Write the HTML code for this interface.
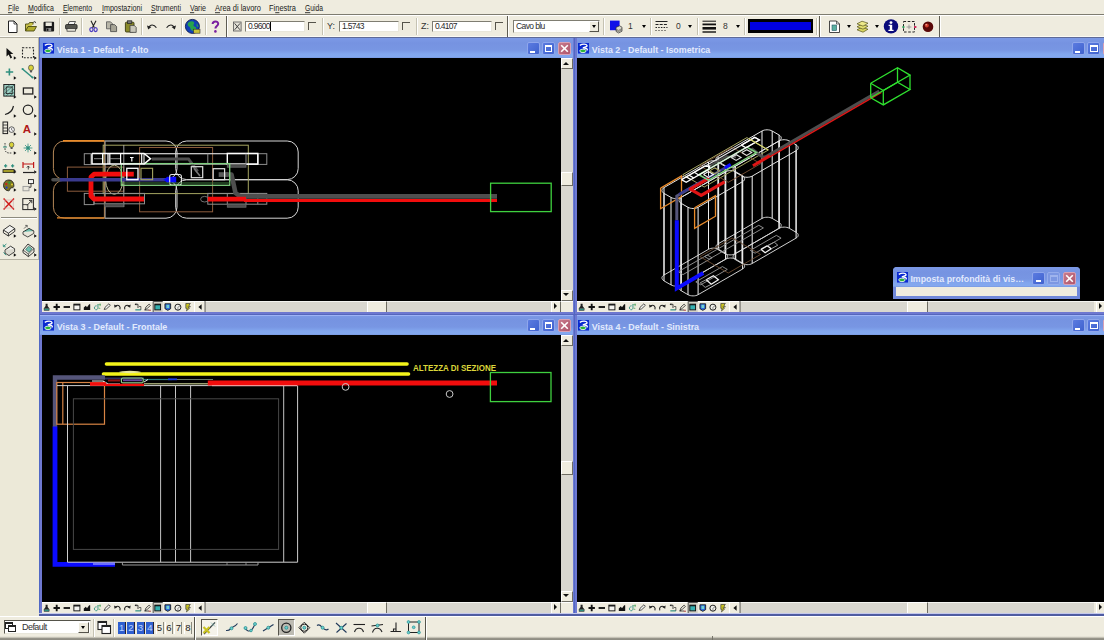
<!DOCTYPE html>
<html lang="it">
<head>
<meta charset="utf-8">
<title>MicroStation</title>
<style>
*{box-sizing:border-box;margin:0;padding:0}
html,body{width:1104px;height:640px;overflow:hidden;background:#ECE9D8}
body{position:relative;font-family:"Liberation Sans",sans-serif;font-size:9px;color:#000}
.a{position:absolute}
#menubar{left:0;top:0;width:1104px;height:15px;background:#EFECDF;border-bottom:1px solid #7E7C70}
#menubar span{position:absolute;top:2px;font-size:9px;line-height:11px;white-space:nowrap;color:#111;letter-spacing:-0.1px}
#menubar u{text-decoration:underline}
#tb{left:0;top:15px;width:1104px;height:23px;background:#EFECDF;border-top:1px solid #fff;border-bottom:1px solid #5E6A98;box-shadow:inset 0 -1px 0 #FBFAF4}
.sep{position:absolute;top:18px;width:2px;height:17px;border-left:1px solid #C5C2B2;border-right:1px solid #fff}
.sep.tall{top:16px;height:21px;border-left-color:#5e5c52}
.inp{position:absolute;top:21px;height:11px;background:#fff;border:1px solid #7F7D72;border-right-color:#E8E6DA;border-bottom-color:#E8E6DA;font-size:8.5px;line-height:9px;padding-left:2px;white-space:nowrap;overflow:hidden;color:#2a2a2a;letter-spacing:-0.7px}
.chk{position:absolute;top:22px;width:8px;height:8px;border-top:1.5px solid #55534a;border-left:1.5px solid #55534a}
.lbl{position:absolute;top:21px;font-size:9px;line-height:11px;color:#333}
.dd{position:absolute;width:0;height:0;border-left:2.5px solid transparent;border-right:2.5px solid transparent;border-top:3px solid #000}
#lt{left:0;top:38px;width:39px;height:222px;background:#EFECDF;border-right:1px solid #B5B2A3;border-bottom:1px solid #B5B2A3}
#leftfill{left:0;top:260px;width:39px;height:356px;background:#ECE9D8}
.win{position:absolute;background:linear-gradient(#6E78D0,#6E78D0);overflow:hidden}
.title{position:absolute;left:0;right:0;top:0;height:20px;background:linear-gradient(#7C99E6 0,#7693E1 5px,#7896E3 12px,#82A6EE 16px,#83A8EF 19px,#7694DC 20px)}
.title b{position:absolute;top:4px;font-size:10px;line-height:12px;font-weight:bold;color:#DDE6FB;white-space:nowrap;letter-spacing:0.15px}
.cv{position:absolute;background:#000;overflow:hidden}
.cv svg{position:absolute;left:0;top:0}
.strip{position:absolute;height:12px;background:#EFECDF;border-top:1px solid #fff}
.track{position:absolute;background:#D9D7CF;border-top:1px solid #f4f4f0}
.thumb{position:absolute;background:#EFECDF;border:1px solid #fff;border-right-color:#6e6c62;border-bottom-color:#6e6c62}
.wb{position:absolute;width:13px;height:13px;border:1px solid #8FA6EC;border-radius:2px;background:linear-gradient(135deg,#5B7BE0,#3F62CF)}
.wb.x{background:linear-gradient(135deg,#C77A8C,#B0566C);border-color:#D8A0B4}
.wb.dis{background:#7C97E2;border-color:#94ABEB}
#status{left:0;top:616px;width:1104px;height:24px;background:#EFECDF;border-top:1px solid #fff}
</style>
</head>
<body>
<div id="menubar" class="a"></div><svg class="a" style="left:0;top:0" width="340" height="15" viewBox="0 0 340 15" font-family="Liberation Sans,sans-serif" font-size="8.600" fill="#1a1a1a"><text id="m0" x="8" y="11.300" textLength="11" lengthAdjust="spacingAndGlyphs"><tspan text-decoration="underline">F</tspan>ile</text><text id="m1" x="28" y="11.300" textLength="26" lengthAdjust="spacingAndGlyphs"><tspan text-decoration="underline">M</tspan>odifica</text><text id="m2" x="63" y="11.300" textLength="29" lengthAdjust="spacingAndGlyphs"><tspan text-decoration="underline">E</tspan>lemento</text><text id="m3" x="102" y="11.300" textLength="40" lengthAdjust="spacingAndGlyphs"><tspan text-decoration="underline">I</tspan>mpostazioni</text><text id="m4" x="151" y="11.300" textLength="30" lengthAdjust="spacingAndGlyphs"><tspan text-decoration="underline">S</tspan>trumenti</text><text id="m5" x="190" y="11.300" textLength="16" lengthAdjust="spacingAndGlyphs"><tspan text-decoration="underline">V</tspan>arie</text><text id="m6" x="215" y="11.300" textLength="46" lengthAdjust="spacingAndGlyphs"><tspan text-decoration="underline">A</tspan>rea di lavoro</text><text id="m7" x="269" y="11.300" textLength="27" lengthAdjust="spacingAndGlyphs">Fi<tspan text-decoration="underline">n</tspan>estra</text><text id="m8" x="305" y="11.300" textLength="18" lengthAdjust="spacingAndGlyphs"><tspan text-decoration="underline">G</tspan>uida</text></svg>
<div id="tb" class="a"></div><div class="a" style="left:0;top:37px;width:39px;height:1px;background:#B0AD9F"></div>
<div class="sep" style="left:59px"></div><div class="sep" style="left:81px"></div><div class="sep" style="left:141px"></div>
<div class="sep" style="left:181px"></div><div class="sep" style="left:205px"></div><div class="sep tall" style="left:226px"></div>
<div class="sep" style="left:322px"></div><div class="sep" style="left:416px"></div><div class="sep tall" style="left:507px"></div>
<div class="sep" style="left:603px"></div><div class="sep" style="left:650px"></div><div class="sep" style="left:697px"></div>
<div class="sep" style="left:744px"></div><div class="sep" style="left:816px"></div><div class="sep tall" style="left:819px"></div><div class="sep tall" style="left:939px"></div>
<div class="inp" style="left:245px;width:60px">0.9600<span style="display:inline-block;width:1px;height:9px;background:#000;vertical-align:top"></span></div><div class="chk" style="left:308px"></div>
<div class="lbl" style="left:327px">Y:</div><div class="inp" style="left:339px;width:60px">1.5743</div><div class="chk" style="left:402px"></div>
<div class="lbl" style="left:421px">Z:</div><div class="inp" style="left:432px;width:60px">0.4107</div><div class="chk" style="left:495px"></div>
<div class="inp" style="left:513px;top:20px;width:87px;height:13px;line-height:11px;letter-spacing:-0.6px">Cavo blu</div>
<div class="a" style="left:589px;top:21px;width:10px;height:11px;background:#EFECDF;border:1px solid #fff;border-right-color:#55534a;border-bottom-color:#55534a"></div>
<div class="dd" style="left:591.5px;top:25px"></div>
<div class="lbl" style="left:628px;font-size:8.5px">1</div><div class="dd" style="left:641.5px;top:25px"></div>
<div class="lbl" style="left:676px;font-size:8.5px">0</div><div class="dd" style="left:688px;top:25px"></div>
<div class="lbl" style="left:723px;font-size:8.5px">8</div><div class="dd" style="left:735.5px;top:25px"></div>
<div class="a" style="left:748px;top:19px;width:65px;height:14px;background:#0000E0;border:3px solid #000;border-left-width:2px;border-right-width:2px"></div>
<div class="dd" style="left:846.5px;top:25px"></div><div class="dd" style="left:874.5px;top:25px"></div>
<svg class="a" style="left:0;top:0" width="1104" height="40" viewBox="0 0 1104 40">
<!-- new -->
<path d="M8.5 21h5.5l3 3v8.5h-8.5z" fill="#fff" stroke="#222" stroke-width="1"/><path d="M14 21v3h3" fill="none" stroke="#222" stroke-width=".8"/>
<!-- open -->
<path d="M25.5 31v-7h3l1-1.5h3.5v2" fill="#c9c24a" stroke="#4a4a12" stroke-width=".9"/><path d="M25.5 31l2.5-4.5h8.5l-2.5 4.5z" fill="#b3ad2e" stroke="#4a4a12" stroke-width=".9"/><path d="M33 22.5l2-1 .8 1.6" fill="none" stroke="#333" stroke-width=".8"/>
<!-- save -->
<rect x="43.5" y="21.8" width="10.6" height="9.8" rx="1" fill="#1a1a1a"/><rect x="45.6" y="22.4" width="6.2" height="3.6" fill="#eceadf"/><rect x="46.4" y="28" width="4.8" height="3.2" fill="#8a8a8a"/><rect x="47" y="28.6" width="1.4" height="2.2" fill="#111"/>
<!-- print -->
<path d="M68 24.5l1.5-3h6l-1.5 3z" fill="#f4f4f4" stroke="#333" stroke-width=".8"/><rect x="65.5" y="24.5" width="11.6" height="4.6" rx="1.2" fill="#55554f" stroke="#222" stroke-width=".8"/><rect x="67" y="28.6" width="8.6" height="2.6" fill="#e4e2d8" stroke="#333" stroke-width=".7"/>
<!-- cut -->
<path d="M91 20.8l3.4 7M96 20.8l-3.6 7" stroke="#222" stroke-width="1.1" fill="none"/><ellipse cx="91.4" cy="29.6" rx="1.6" ry="2" fill="none" stroke="#4a3cc0" stroke-width="1.2"/><ellipse cx="95.6" cy="29.6" rx="1.6" ry="2" fill="none" stroke="#4a3cc0" stroke-width="1.2"/>
<!-- copy -->
<path d="M106.5 21.8h4l2 2v5h-6z" fill="#b8b6a8" stroke="#555" stroke-width=".8"/><path d="M110.6 24.6h4l2 2v5h-6z" fill="#a7a596" stroke="#444" stroke-width=".8"/>
<!-- paste -->
<rect x="125.4" y="22.2" width="8.6" height="9.8" rx="1" fill="#8a8a2a" stroke="#3a3a10" stroke-width=".9"/><rect x="127.6" y="20.8" width="4.2" height="2.6" fill="#777" stroke="#222" stroke-width=".7"/><path d="M130 25.4h4.2l2 2v5h-6.2z" fill="#c9c7ba" stroke="#444" stroke-width=".8"/>
<!-- undo / redo -->
<path d="M149 27.6c1-3.4 5-3.6 7.4.2" fill="none" stroke="#222" stroke-width="1.1"/><path d="M147 25.4l1.2 4 3.2-2.4z" fill="#222"/>
<path d="M174 27.6c-1-3.4-5-3.6-7.4.2" fill="none" stroke="#222" stroke-width="1.1"/><path d="M176 25.4l-1.2 4-3.2-2.4z" fill="#222"/>
<!-- globe -->
<circle cx="192.4" cy="26.4" r="7" fill="#1240b8" stroke="#0a1a50" stroke-width=".9"/><path d="M188.4 22.6c2-1.6 4.6-1.6 5.6-.4s-1.2 2.4-.4 3.6 3 1 2.6 3.2-3.4 2.6-4.8 1.2-.8-2.8-2.4-3.6-1.800-2.600-.6-4z" fill="#27a34c"/><path d="M196.500 23.400c1.400.8 2 2.400 1.800 3.600l-1.600-.8z" fill="#27a34c"/><rect x="193.600" y="29.200" width="6.400" height="4" fill="#c8c23a" stroke="#333" stroke-width=".6"/>
<!-- help -->
<path d="M212.600 24c.2-3.400 5.600-3.400 5.600-.2 0 2.200-2.800 2.400-2.800 4.800" fill="none" stroke="#7a1fa0" stroke-width="2"/><circle cx="215.400" cy="31.400" r="1.300" fill="#7a1fa0"/>
<!-- X lock -->
<rect x="233.500" y="22" width="7.600" height="9" fill="#e4e2d8" stroke="#555" stroke-width=".8"/><path d="M234.600 23.400l5.400 6.400M240 23.400l-5.400 6.400" stroke="#333" stroke-width=".9"/>
<!-- level icon -->
<rect x="610" y="20.600" width="9.600" height="9.600" fill="#1010e8"/><path d="M616 27.400l3.600-1.600 2.400 1.400v4l-3.400 1.800-2.600-1.600z" fill="#d8d6ca" stroke="#333" stroke-width=".7"/><path d="M616 29l2.600 1.400 3.400-1.800M616 30.200l2.600 1.400 3.400-1.800" fill="none" stroke="#333" stroke-width=".5"/>
<!-- line style -->
<path d="M655.500 21.500h12" stroke="#222" stroke-width="1"/><path d="M655.500 24.500h12" stroke="#222" stroke-width="1" stroke-dasharray="3 1.200"/><path d="M655.500 27.500h12" stroke="#222" stroke-width="1" stroke-dasharray="1.500 1.200"/><path d="M655.500 30.500h12" stroke="#222" stroke-width="1" stroke-dasharray="1 2"/>
<!-- weight -->
<path d="M702.500 21.200h13.500" stroke="#111" stroke-width="1"/><path d="M702.500 24.400h13.500" stroke="#111" stroke-width="1.800"/><path d="M702.500 28.300h13.500" stroke="#111" stroke-width="2.600"/><path d="M702.500 32h13.500" stroke="#111" stroke-width="1.400"/>
<!-- doc icon -->
<path d="M829.500 21h7l3 3v8.500h-10z" fill="#fff" stroke="#333" stroke-width=".9"/><path d="M836.500 21v3h3" fill="none" stroke="#333" stroke-width=".7"/><rect x="832" y="25" width="4.600" height="5.600" fill="#5ab0a0" stroke="#2a5a6a" stroke-width=".6"/>
<!-- layers -->
<path d="M857 29.800l5-2.600 6 2-5 3z" fill="#d9d560" stroke="#55531a" stroke-width=".7"/><path d="M857 26.800l5-2.600 6 2-5 3z" fill="#e3df70" stroke="#55531a" stroke-width=".7"/><path d="M857 23.800l5-2.600 6 2-5 3z" fill="#ece88a" stroke="#55531a" stroke-width=".7"/>
<!-- info -->
<circle cx="891" cy="26.400" r="7.200" fill="#0a0a7a"/><rect x="889.800" y="24.800" width="2.400" height="5.800" fill="#fff"/><circle cx="891" cy="22.600" r="1.400" fill="#fff"/><rect x="888.600" y="24.800" width="2" height="1.200" fill="#fff"/><rect x="888.400" y="29.800" width="5.200" height="1.200" fill="#fff"/>
<!-- sel -->
<rect x="903.500" y="21.500" width="11" height="10.500" fill="none" stroke="#222" stroke-width="1" stroke-dasharray="2.600 1.600"/><path d="M909 24.600v4.600M906.600 27h4.800" stroke="#888" stroke-width=".8"/><rect x="914" y="26" width="2.400" height="2" fill="#d03060"/><rect x="902.400" y="26" width="2" height="2" fill="#30a060"/>
<!-- ball -->
<circle cx="928" cy="26.800" r="5.300" fill="#5a0808"/><circle cx="926.800" cy="25.400" r="2" fill="#d03a2a"/><circle cx="926.200" cy="24.800" r=".8" fill="#f8b0a0"/>
</svg>
<div id="lt" class="a"></div><div id="leftfill" class="a"></div>
<div class="a" style="left:1px;top:217px;width:36px;height:2px;border-top:1px solid #8c8a7e;border-bottom:1px solid #fff"></div>
<svg class="a" style="left:0;top:38px" width="40" height="224" viewBox="0 38 40 224">
<g id="tri" fill="#111"><path d="M13.8 56.3l2.600 1.700-2.600 1.700z M34.2 56.3l2.600 1.700-2.600 1.700z M13.8 76.3l2.600 1.700-2.600 1.700z M34.2 76.3l2.600 1.700-2.600 1.700z M13.8 95.3l2.600 1.700-2.600 1.700z M34.2 95.3l2.600 1.700-2.600 1.700z M13.8 114.3l2.600 1.700-2.600 1.700z M34.2 114.3l2.600 1.700-2.600 1.700z M13.8 132.3l2.600 1.700-2.600 1.700z M34.2 132.3l2.600 1.700-2.600 1.700z M13.8 151.3l2.600 1.700-2.600 1.700z M34.2 151.3l2.600 1.700-2.600 1.700z M13.8 170.3l2.600 1.700-2.600 1.700z M34.2 170.3l2.600 1.700-2.600 1.700z M13.8 188.3l2.600 1.700-2.600 1.700z M34.2 188.3l2.600 1.700-2.600 1.700z M34.2 207.3l2.600 1.700-2.600 1.700z M13.8 234.3l2.600 1.700-2.600 1.700z M34.2 234.3l2.600 1.700-2.600 1.700z M13.8 253.3l2.600 1.700-2.600 1.700z M34.2 253.3l2.600 1.700-2.600 1.700z"/></g>
<!-- r1 arrow, fence -->
<path d="M6.500 48v8.600l2.200-2 1.800 3.800 1.600-.8-1.800-3.600h3z" fill="#111"/>
<rect x="22.500" y="47.800" width="11" height="10" fill="none" stroke="#222" stroke-width="1.100" stroke-dasharray="1.800 1.400"/>
<!-- r2 plus, line+bulb -->
<path d="M9.400 68.500v7M5.800 72h7.400" stroke="#2f8f7f" stroke-width="1.600"/>
<path d="M22.500 69l10 8.500" stroke="#2f8f7f" stroke-width="1.500"/><circle cx="22.600" cy="69" r="1.100" fill="#2f8f7f"/><circle cx="32.600" cy="77.500" r="1.100" fill="#2f8f7f"/>
<ellipse cx="31" cy="67.800" rx="2.500" ry="2.800" fill="#d8d23a" stroke="#444" stroke-width=".7"/><rect x="29.900" y="70.400" width="2.200" height="2" fill="#555"/>
<!-- r3 hatch, rect -->
<rect x="3.800" y="84.500" width="10.800" height="11.600" fill="#9fd0c4" stroke="#222" stroke-width="1"/><path d="M4 90l6-5.500M4 94l10-9M6 96l8.500-7.500M10 96l4.500-4" stroke="#2a5a52" stroke-width=".7"/><rect x="6.200" y="87" width="6" height="6.600" fill="none" stroke="#222" stroke-width=".8"/>
<rect x="23.400" y="88" width="9.400" height="6" fill="none" stroke="#222" stroke-width="1.300"/>
<!-- r4 arc, circle -->
<path d="M5 114.500c4.500-1 7.500-4 8.500-8.500" fill="none" stroke="#222" stroke-width="1.200"/>
<circle cx="28" cy="109.800" r="4.700" fill="none" stroke="#222" stroke-width="1.200"/>
<!-- r5 tags, A -->
<rect x="3" y="122" width="4.600" height="11.600" fill="none" stroke="#222" stroke-width="1"/><path d="M3 125h4.600M3 128h4.600M3 131h4.600" stroke="#222" stroke-width=".8"/><circle cx="11.600" cy="129.600" r="2.800" fill="#f4f4f4" stroke="#333" stroke-width=".8"/><path d="M11.600 128v1.800l1.200.8" stroke="#333" stroke-width=".6" fill="none"/>
<text x="22.800" y="132.600" font-family="Liberation Sans,sans-serif" font-weight="bold" font-size="11.500" fill="#b01818">A</text>
<!-- r6 -->
<path d="M5 143v6c0 3 2 4 4 4h3" fill="none" stroke="#333" stroke-width=".9" stroke-dasharray="1.600 1"/><ellipse cx="11.600" cy="144.800" rx="2.300" ry="2.600" fill="#d8d23a" stroke="#444" stroke-width=".7"/><rect x="10.600" y="147.200" width="2" height="1.800" fill="#555"/><path d="M3 147h4" stroke="#2f8f7f" stroke-width="1"/>
<circle cx="28" cy="148" r="1.800" fill="#2f8f7f"/><path d="M28 143.600v8.800M23.600 148h8.800M25 145l6 6M31 145l-6 6" stroke="#2f8f7f" stroke-width=".8"/>
<!-- r7 -->
<path d="M5.600 164.200v3.200M4 165.800h3.200M12.600 164.200v3.200M11 165.800h3.200" stroke="#2f8f7f" stroke-width="1.200"/><rect x="3" y="169.600" width="11" height="3" fill="#a39c2a" stroke="#222" stroke-width=".8"/><path d="M14 169.600l2 1.500-2 1.500z" fill="#222"/>
<path d="M23 162v6M33.600 162v6M23 164h10.600" stroke="#c01818" stroke-width="1.200"/><path d="M23 172.500h11" stroke="#222" stroke-width="1.200"/><path d="M28.300 166v3.500M26.800 167.600l1.500-1.600 1.500 1.600" stroke="#222" stroke-width=".8" fill="none"/>
<!-- r8 palette, boxes -->
<path d="M9 180c-4 0-5.500 3-5.500 5.400 0 3.600 3 5.400 5 5.400 1.600 0 1-1.800 2-2.600 1.200-.9 3.400.4 3.400-2.800 0-3-2-5.400-4.900-5.400z" fill="#7a7424" stroke="#222" stroke-width=".9"/><circle cx="6.200" cy="184" r="1.100" fill="#d02020"/><circle cx="9.400" cy="182.600" r="1.100" fill="#20a040"/><circle cx="6.600" cy="187.600" r="1.100" fill="#2040d0"/><circle cx="12" cy="184.600" r="1" fill="#e0d030"/>
<rect x="28.500" y="179.600" width="5" height="4" fill="#f4f4f4" stroke="#222" stroke-width=".9"/><rect x="23" y="186.400" width="6" height="4.400" fill="#e8e6da" stroke="#999" stroke-width=".9"/><path d="M31 183.600v3.600h-2" fill="none" stroke="#222" stroke-width=".8"/>
<!-- r9 delete, scale -->
<path d="M3.600 198.600l10.400 11M14 198.600l-10.400 11" stroke="#d01818" stroke-width="1.400"/><rect x="4.400" y="200" width="8.800" height="8" fill="none" stroke="#caa" stroke-width=".6"/>
<rect x="22.800" y="198.600" width="10.600" height="11" fill="none" stroke="#222" stroke-width="1"/><path d="M22.800 204.600h5v5" fill="none" stroke="#222" stroke-width=".8"/><path d="M27 205.400l4.600-4.800M29 200.400h2.800v2.800" fill="none" stroke="#222" stroke-width=".9"/>
<!-- r10 3d -->
<path d="M3.400 230l6.400-4.600 5 3.200-6.400 4.600z" fill="#f2f2ee" stroke="#222" stroke-width=".9"/><path d="M3.400 230v2.800l5 3.200 6.400-4.600v-2.800M8.400 233.200v2.800" fill="none" stroke="#222" stroke-width=".9"/>
<path d="M23 232l6-3.600 4.800 2.600-6 3.600z" fill="#6fc0b0" stroke="#222" stroke-width=".9"/><path d="M23 232v2.400l4.800 2.600 6-3.600V231" fill="#e8e6da" stroke="#222" stroke-width=".8"/><path d="M24 228.600l3-3M25.200 225.400h2v2" stroke="#333" stroke-width=".7" fill="none"/>
<!-- r11 -->
<path d="M5 250l5.600-3.800 4 2.600-5.600 3.800z" fill="#f2f2ee" stroke="#222" stroke-width=".9"/><path d="M5 250v3l4 2.600 5.600-3.800v-3" fill="#dcdad0" stroke="#222" stroke-width=".8"/><path d="M3.400 246.400l3-2.400M3.200 244.400l.2 2.200 2.200.2" stroke="#2f8f7f" stroke-width=".9" fill="none"/><path d="M3.600 252.400l2.400 2.800" stroke="#2f8f7f" stroke-width="1"/>
<path d="M23 250l5-6 6 4.400v3.600l-5.600 4.600-5.400-4z" fill="#eceae0" stroke="#222" stroke-width=".9"/><path d="M25.600 249.600l3-3.400 3.400 2.600-3 3.400z" fill="#6fc0b0" stroke="#2a5a52" stroke-width=".6"/><path d="M23 250l5.400 4 5.600-5.600M28.400 254v2.600" fill="none" stroke="#222" stroke-width=".7"/>
</svg>
<div class="win" id="w1" style="left:39px;top:38px;width:536px;height:277px"><div class="a" style="left:0;top:0;width:1px;height:277px;background:#5068C4"></div><div class="title" style="top:0px;left:1px;right:2.5px"></div><svg class="a" style="left:0;top:0" width="113.39999999999999" height="20.6" viewBox="0 0 113.39999999999999 20.6"><text x="17.8" y="14.6" font-family="Liberation Sans,sans-serif" font-weight="bold" font-size="9.700" fill="#E2EAFD" textLength="91.6" lengthAdjust="spacingAndGlyphs">Vista 1 - Default - Alto</text></svg><svg class="a" style="left:3.5px;top:4.5px" width="11.500" height="11" viewBox="0 0 13 12" preserveAspectRatio="none"><rect x="0" y="0" width="12.500" height="11.500" fill="#0a2ad0"/><path d="M2 2.600c3-2 7.500-1.800 8.200 0 .6 1.600-3 2-4.600 2.600 2.400.2 5.400.8 5 2.800" fill="none" stroke="#fff" stroke-width="1.500"/><ellipse cx="5.600" cy="8.600" rx="3.600" ry="1.900" fill="#2bb53a" stroke="#fff" stroke-width=".9"/></svg><div class="cv" style="left:3px;top:20px;width:519px;height:243px"><svg width="519" height="243" viewBox="42 58 519 243"><defs><clipPath id="cR1"><rect x="104.5" y="130" width="300" height="100"/></clipPath><clipPath id="cL1"><rect x="40" y="130" width="64.5" height="100"/></clipPath></defs><rect x="53.4" y="141.0" width="123.6" height="38.6" rx="11" fill="none" stroke="#d6d6d6" stroke-width="1" clip-path="url(#cR1)"/><rect x="53.4" y="179.8" width="123.6" height="38.4" rx="11" fill="none" stroke="#d6d6d6" stroke-width="1" clip-path="url(#cR1)"/><rect x="53.4" y="141.0" width="123.6" height="38.6" rx="11" fill="none" stroke="#b48858" stroke-width="1" clip-path="url(#cL1)"/><rect x="53.4" y="179.8" width="123.6" height="38.4" rx="11" fill="none" stroke="#b48858" stroke-width="1" clip-path="url(#cL1)"/><rect x="175.7" y="141.0" width="122.5" height="38.6" rx="11" fill="none" stroke="#d6d6d6" stroke-width="1"/><rect x="175.7" y="179.8" width="122.5" height="38.4" rx="11" fill="none" stroke="#d6d6d6" stroke-width="1"/><path d="M63.0 140.9 L104.4 140.9" fill="none" stroke="#e88a2a" stroke-width="1.6" /><path d="M57.0 217.9 L104.4 217.9" fill="none" stroke="#e88a2a" stroke-width="1.4" /><path d="M104.4 141.0 L104.4 218.0" fill="none" stroke="#b48858" stroke-width="1" /><rect x="103.2" y="145.2" width="145.1" height="48.4" rx="0" fill="none" stroke="#a6a662" stroke-width="1"/><rect x="139.6" y="147.5" width="73.0" height="64.3" rx="0" fill="none" stroke="#8c5c3c" stroke-width="1"/><rect x="67.4" y="167.1" width="56.4" height="24.1" rx="0" fill="none" stroke="#8c5c3c" stroke-width="1"/><path d="M105.3 141.0 L105.3 218.0" fill="none" stroke="#9a9a9a" stroke-width="0.8" /><path d="M123.8 145.0 L123.8 207.0" fill="none" stroke="#b0b0b0" stroke-width="0.9" /><ellipse cx="114.3" cy="179.7" rx="8.700" ry="14.600" fill="none" stroke="#b4b48a" stroke-width="1"/><rect x="84.3" y="153.7" width="6.7" height="10.9" rx="0" fill="none" stroke="#8e8e8e" stroke-width="1"/><rect x="144.0" y="153.7" width="113.8" height="10.3" rx="0" fill="none" stroke="#d6d6d6" stroke-width="1.2"/><rect x="257.8" y="153.7" width="9.0" height="10.7" rx="0" fill="none" stroke="#8e8e8e" stroke-width="1"/><path d="M207.8 153.7 L207.8 164.0" fill="none" stroke="#8e8e8e" stroke-width="1" /><rect x="227.3" y="153.4" width="30.5" height="10.8" rx="0" fill="none" stroke="#fff" stroke-width="1.4"/><path d="M246.0 153.7 L246.0 164.0" fill="none" stroke="#8e8e8e" stroke-width="1" /><rect x="227.3" y="164.2" width="18.7" height="3.0" rx="0" fill="#4a4a4a" stroke="#6a6a6a" stroke-width="0.8"/><rect x="84.3" y="193.4" width="9.7" height="11.2" rx="0" fill="none" stroke="#8e8e8e" stroke-width="1"/><rect x="94.0" y="193.4" width="50.5" height="10.4" rx="0" fill="none" stroke="#8e8e8e" stroke-width="1"/><rect x="104.7" y="203.8" width="19.0" height="3.0" rx="0" fill="#4a4a4a" stroke="#6a6a6a" stroke-width="0.8"/><rect x="207.8" y="193.4" width="59.0" height="10.8" rx="0" fill="none" stroke="#8e8e8e" stroke-width="1"/><path d="M227.3 193.4 L227.3 204.2" fill="none" stroke="#8e8e8e" stroke-width="1" /><path d="M246.0 193.4 L246.0 204.2" fill="none" stroke="#8e8e8e" stroke-width="1" /><path d="M257.8 193.4 L257.8 204.2" fill="none" stroke="#8e8e8e" stroke-width="1" /><rect x="227.3" y="204.2" width="18.7" height="3.0" rx="0" fill="#4a4a4a" stroke="#6a6a6a" stroke-width="0.8"/><ellipse cx="204.600" cy="199.200" rx="4" ry="2.800" fill="none" stroke="#7a7a7a" stroke-width=".9"/><path d="M151.8 158.9 L188.5 158.9 L197.6 171.5" fill="none" stroke="#4e4e4e" stroke-width="3" /><rect x="218.7" y="172.2" width="9.3" height="4.7" rx="0" fill="#5a5a5a" stroke="none" stroke-width="0"/><path d="M226.0 174.5 L231.5 174.5 L235.5 193.0 L240.0 196.4 L497.0 196.4" fill="none" stroke="#4e4e4e" stroke-width="4.6" stroke-linejoin="round"/><path d="M133.8 174.2 L94.0 174.2 L91.0 177.0 L91.0 196.0 L94.0 199.0 L144.0 199.0" fill="none" stroke="#f20d0d" stroke-width="4.8" stroke-linejoin="round"/><path d="M207.8 199.2 L246.0 199.2" fill="none" stroke="#f20d0d" stroke-width="4.8" /><path d="M244.0 200.5 L497.0 200.5" fill="none" stroke="#f20d0d" stroke-width="3.2" /><path d="M53.0 179.7 L61.0 179.7" fill="none" stroke="#4e4e4e" stroke-width="3.6" stroke-linecap="round"/><path d="M60.0 179.7 L168.0 179.7" fill="none" stroke="#3a3a8e" stroke-width="3.6" /><rect x="166.7" y="176.8" width="9.5" height="5.8" rx="0" fill="#0b0bff" stroke="none" stroke-width="0"/><path d="M163.500 179.700l4-3v6z" fill="#0b0bff"/><rect x="169.7" y="174.5" width="11.7" height="10.5" rx="2" fill="none" stroke="#e8e8e8" stroke-width="1.1"/><rect x="121.3" y="163.6" width="108.4" height="21.7" rx="0" fill="none" stroke="#7fd07f" stroke-width="1.3"/><path d="M121.3 183.0 L229.7 183.0" fill="none" stroke="#3f7a3f" stroke-width="1" /><path d="M92.0 153.5 L144.0 153.5 L150.5 158.7 L144.0 164.0 L92.0 164.0 L92.0 153.5" fill="none" stroke="#fff" stroke-width="1.5" /><path d="M102.6 153.5 L102.6 164.0" fill="none" stroke="#fff" stroke-width="1.2" /><path d="M108.0 153.5 L108.0 164.0" fill="none" stroke="#fff" stroke-width="1.2" /><path d="M109.8 153.5 L109.8 164.0" fill="none" stroke="#fff" stroke-width="1.2" /><path d="M120.6 153.5 L120.6 164.0" fill="none" stroke="#fff" stroke-width="1.2" /><path d="M141.7 153.5 L141.7 164.0" fill="none" stroke="#fff" stroke-width="1.2" /><path d="M94.0 158.7 L102.0 158.7" fill="none" stroke="#aaa" stroke-width="0.8" /><path d="M110.0 158.7 L120.0 158.7" fill="none" stroke="#aaa" stroke-width="0.8" /><path d="M130.0 157.5 L133.6 157.5" fill="none" stroke="#fff" stroke-width="1" /><path d="M131.8 157.5 L131.8 161.5" fill="none" stroke="#fff" stroke-width="1.2" /><rect x="126.8" y="168.3" width="11.2" height="11.4" rx="0" fill="none" stroke="#fff" stroke-width="1.3"/><rect x="141.0" y="168.3" width="11.6" height="11.4" rx="0" fill="none" stroke="#a6a662" stroke-width="1.1"/><rect x="191.3" y="166.7" width="11.4" height="11.0" rx="0" fill="none" stroke="#e0e0e0" stroke-width="1.2"/><path d="M194.0 168.5 L200.0 176.0" fill="none" stroke="#777" stroke-width="1.6" /><rect x="213.2" y="168.7" width="11.4" height="11.0" rx="0" fill="none" stroke="#e0e0e0" stroke-width="1.2"/><rect x="490.6" y="183.2" width="60.6" height="28.4" rx="0" fill="none" stroke="#3fd03f" stroke-width="1.3"/></svg></div><div class="strip" style="left:3px;top:263px;width:530.5px"></div><div class="track" style="left:165.5px;top:263px;width:346.0px;height:11.500px"></div><svg class="a" style="left:3px;top:263px" width="166" height="12" viewBox="0 0 166 12"><g transform="translate(4.60 6) scale(.84) translate(-4.60 -6)"><path d="M3.3999999999999995 2.200h2.400v2.600l1.800 2.400h-6l1.800-2.400z" fill="#222"/><rect x="1.5999999999999996" y="7.600" width="6" height="2.400" fill="#2f8f7f" stroke="#222" stroke-width=".6"/></g><g transform="translate(14.70 6) scale(.84) translate(-14.70 -6)"><path d="M14.7 2.200v7.600M10.899999999999999 6h7.600" stroke="#111" stroke-width="2.200"/></g><g transform="translate(24.80 6) scale(.84) translate(-24.80 -6)"><path d="M20.999999999999996 6h7.600" stroke="#111" stroke-width="2.200"/></g><g transform="translate(34.90 6) scale(.84) translate(-34.90 -6)"><rect x="31.299999999999997" y="2.600" width="7.200" height="6.800" fill="#f4f4f0" stroke="#111" stroke-width="1.100"/><path d="M31.299999999999997 3.400h7.200" stroke="#111" stroke-width="1.600"/></g><g transform="translate(45.00 6) scale(.84) translate(-45.00 -6)"><path d="M41.2 9.600v-3l2.400-2 1.400 1.600 2.600-3.600 1.200 0v7z" fill="#111"/></g><g transform="translate(55.10 6) scale(.84) translate(-55.10 -6)"><path d="M52.5 8.600c-1.600-2 0-4 2-4M56.1 2.400v4.400c0 2-1.600 2.800-3 2.400" fill="none" stroke="#2f8f7f" stroke-width="1.100"/><path d="M56.7 3.200l2.400-.8-.6 2.600M56.9 7.400l2 .2" stroke="#3a9a4a" stroke-width=".9" fill="none"/></g><g transform="translate(65.20 6) scale(.84) translate(-65.20 -6)"><path d="M61.59999999999999 9l1-2.600 4.600-4.200 1.800 1.800-4.600 4.200z" fill="#f4f4f0" stroke="#222" stroke-width=".9"/></g><path d="M77.89999999999999 8.400c1-3.200-1.400-5.200-4.400-3.600" fill="none" stroke="#222" stroke-width="1.100"/><path d="M72.1 3.400l.4 3.400 2.800-1.600z" fill="#222"/><path d="M82.8 8.400c-1-3.200 1.400-5.200 4.400-3.600" fill="none" stroke="#222" stroke-width="1.100"/><path d="M88.6 3.400l-.4 3.400-2.800-1.600z" fill="#222"/><g transform="translate(95.50 6) scale(.84) translate(-95.50 -6)"><path d="M92.49999999999999 2.800h3.600v4.400" fill="none" stroke="#222" stroke-width="1"/><path d="M92.09999999999998 2.800l2-1.400v2.800z" fill="#222"/><path d="M92.89999999999999 9.400h6.600" stroke="#2f8f7f" stroke-width="1.400"/><path d="M97.29999999999998 5.400h2.200v4" stroke="#222" stroke-width=".8" fill="none"/></g><g transform="translate(105.60 6) scale(.84) translate(-105.60 -6)"><path d="M102.0 9.600h5.400M102.39999999999999 9.600l1.200-3.600 3.800-3.400 1.600 1.600-3.800 3.400z" fill="none" stroke="#222" stroke-width=".9"/><path d="M107.0 9.800h2.600" stroke="#a02020" stroke-width="1"/></g><rect x="110.69999999999999" y="0" width="10" height="11.500" fill="#d4d1c6"/><path d="M111.19999999999999 11.500v-11h9.500" fill="none" stroke="#555" stroke-width="1"/><g transform="translate(115.70 6) scale(.84) translate(-115.70 -6)"><rect x="112.29999999999998" y="2.600" width="6.800" height="6.800" fill="#35b0b0" stroke="#111" stroke-width="1.100"/><path d="M112.29999999999998 3.300h6.800" stroke="#111" stroke-width="1.300"/></g><g transform="translate(125.80 6) scale(.84) translate(-125.80 -6)"><path d="M122.39999999999998 2.200h6.800v5.800l-3.400 2-3.400-2z" fill="#2e6ad8" stroke="#111" stroke-width="1"/><rect x="124.19999999999999" y="3.400" width="3.200" height="3.800" fill="#6fd0d0"/></g><g transform="translate(135.90 6) scale(.84) translate(-135.90 -6)"><circle cx="135.89999999999998" cy="6.200" r="3.600" fill="#f0f0ea" stroke="#111" stroke-width="1.100"/><path d="M135.89999999999998 6.200v3.600M135.89999999999998 6.200l3-1.800" stroke="#555" stroke-width=".7"/></g><g transform="translate(146.00 6) scale(.84) translate(-146.00 -6)"><path d="M143.4 1.800h5.400l-1.600 2 1.600 2h-3l2 1.600-3.600 3.200.8-3h-1.600z" fill="#c9c320" stroke="#333" stroke-width=".8"/></g><rect x="152.500" y="0.500" width="10" height="11" fill="#EFECDF" stroke="#fff" stroke-width="1"/><path d="M152 11.500h11v-11.500" fill="none" stroke="#55534a" stroke-width="1"/><path d="M159.600 3.200v5.600l-3.200-2.800z" fill="#111"/></svg><div class="thumb" style="left:328px;top:263px;width:19.5px;height:11.5px"></div><div class="thumb" style="left:511.5px;top:263px;width:10.5px;height:11.5px"></div><div class="a" style="left:514.75px;top:265.25px;width:0;height:0;border-top:3px solid transparent;border-bottom:3px solid transparent;border-left:3.500px solid #111"></div><div class="track" style="left:522px;top:20px;width:11.500px;height:243px"></div><div class="thumb" style="left:522px;top:20px;width:11.5px;height:11px"></div><div class="a" style="left:524.25px;top:23.5px;width:0;height:0;border-left:3px solid transparent;border-right:3px solid transparent;border-bottom:3.500px solid #111"></div><div class="thumb" style="left:522px;top:251.5px;width:11.5px;height:11.5px"></div><div class="a" style="left:524.25px;top:255.25px;width:0;height:0;border-left:3px solid transparent;border-right:3px solid transparent;border-top:3.500px solid #111"></div><div class="thumb" style="left:522px;top:134px;width:11.5px;height:13.5px"></div><div class="wb" style="left:487.5px;top:4px"><div class="a" style="left:2.500px;top:7.500px;width:5px;height:2px;background:#fff"></div></div><div class="wb" style="left:502.9px;top:4px"><div class="a" style="left:2px;top:2px;width:7.500px;height:7px;border:1px solid #fff;border-top-width:2px"></div></div><div class="wb x" style="left:518.5px;top:4px"><svg class="a" style="left:0;top:0" width="11" height="11" viewBox="0 0 11 11"><path d="M2.200 2.200l6.600 6.600M8.800 2.200l-6.600 6.600" stroke="#fff" stroke-width="1.600"/></svg></div></div>
<div class="win" id="w2" style="left:574px;top:38px;width:540px;height:277px"><div class="a" style="left:0;top:0;width:1px;height:277px;background:#5068C4"></div><div class="title" style="top:0px;left:2.5px;right:0px"></div><svg class="a" style="left:0;top:0" width="140.3" height="20.6" viewBox="0 0 140.3 20.6"><text x="17.8" y="14.6" font-family="Liberation Sans,sans-serif" font-weight="bold" font-size="9.700" fill="#E2EAFD" textLength="118.5" lengthAdjust="spacingAndGlyphs">Vista 2 - Default - Isometrica</text></svg><svg class="a" style="left:3.5px;top:4.5px" width="11.500" height="11" viewBox="0 0 13 12" preserveAspectRatio="none"><rect x="0" y="0" width="12.500" height="11.500" fill="#0a2ad0"/><path d="M2 2.600c3-2 7.500-1.800 8.200 0 .6 1.600-3 2-4.600 2.600 2.400.2 5.400.8 5 2.800" fill="none" stroke="#fff" stroke-width="1.500"/><ellipse cx="5.600" cy="8.600" rx="3.600" ry="1.900" fill="#2bb53a" stroke="#fff" stroke-width=".9"/></svg><div class="cv" style="left:3px;top:20px;width:527px;height:243px"><svg width="527" height="243" viewBox="577 58 527 243"><path d="M708.5 161.9 L709.6 161.4 L710.8 161.0 L712.2 160.8 L713.6 160.7 L715.0 160.8 L716.3 161.0 L717.6 161.4 L718.6 161.9 L725.6 165.9 L726.5 166.6 L727.1 167.3 L727.5 168.1 L727.7 168.9 L727.5 169.7 L727.1 170.4 L726.5 171.2 L725.6 171.8 L681.1 197.4 L680.1 198.0 L678.8 198.3 L677.5 198.6 L676.1 198.7 L674.7 198.6 L673.3 198.3 L672.1 198.0 L671.0 197.4 L664.0 193.4 L663.2 192.8 L662.5 192.1 L662.1 191.3 L661.9 190.5 L662.1 189.7 L662.5 188.9 L663.2 188.2 L664.0 187.6 L708.5 161.9" fill="none" stroke="#e4e4e4" stroke-width="1" /><path d="M708.5 249.3 L709.6 248.8 L710.8 248.4 L712.2 248.2 L713.6 248.1 L715.0 248.2 L716.3 248.4 L717.6 248.8 L718.6 249.3 L725.6 253.3 L726.5 254.0 L727.1 254.7 L727.5 255.5 L727.7 256.3 L727.5 257.1 L727.1 257.9 L726.5 258.6 L725.6 259.2 L681.1 284.9 L680.1 285.4 L678.8 285.8 L677.5 286.0 L676.1 286.1 L674.7 286.0 L673.3 285.8 L672.1 285.4 L671.0 284.9 L664.0 280.9 L663.2 280.2 L662.5 279.5 L662.1 278.7 L661.9 277.9 L662.1 277.1 L662.5 276.3 L663.2 275.6 L664.0 275.0 L708.5 249.3" fill="none" stroke="#cfcfcf" stroke-width="1" /><path d="M708.5 161.9 L708.5 249.3" fill="none" stroke="#ececec" stroke-width="1.05" /><path d="M718.6 161.9 L718.6 249.3" fill="none" stroke="#ececec" stroke-width="1.05" /><path d="M725.6 165.9 L725.6 253.3" fill="none" stroke="#ececec" stroke-width="1.05" /><path d="M725.6 171.8 L725.6 259.2" fill="none" stroke="#ececec" stroke-width="1.05" /><path d="M681.1 197.4 L681.1 284.9" fill="none" stroke="#ececec" stroke-width="1.05" /><path d="M671.0 197.4 L671.0 284.9" fill="none" stroke="#ececec" stroke-width="1.05" /><path d="M664.0 193.4 L664.0 280.9" fill="none" stroke="#ececec" stroke-width="1.05" /><path d="M664.0 187.6 L664.0 275.0" fill="none" stroke="#ececec" stroke-width="1.05" /><path d="M725.6 171.8 L726.7 171.3 L727.9 170.9 L729.3 170.7 L730.7 170.6 L732.1 170.7 L733.4 170.9 L734.6 171.3 L735.7 171.8 L742.6 175.7 L743.5 176.4 L744.1 177.1 L744.5 177.9 L744.7 178.7 L744.5 179.5 L744.1 180.3 L743.5 181.0 L742.6 181.6 L698.1 207.3 L697.1 207.8 L695.8 208.2 L694.5 208.4 L693.1 208.5 L691.7 208.4 L690.3 208.2 L689.1 207.8 L688.0 207.3 L681.1 203.3 L680.2 202.7 L679.6 202.0 L679.2 201.2 L679.0 200.4 L679.2 199.6 L679.6 198.8 L680.2 198.1 L681.1 197.4 L725.6 171.8" fill="none" stroke="#e4e4e4" stroke-width="1" /><path d="M725.6 259.2 L726.7 258.7 L727.9 258.3 L729.3 258.1 L730.7 258.0 L732.1 258.1 L733.4 258.3 L734.6 258.7 L735.7 259.2 L742.6 263.2 L743.5 263.8 L744.1 264.5 L744.5 265.3 L744.7 266.1 L744.5 266.9 L744.1 267.7 L743.5 268.4 L742.6 269.0 L698.1 294.7 L697.1 295.2 L695.8 295.6 L694.5 295.8 L693.1 295.9 L691.7 295.8 L690.3 295.6 L689.1 295.2 L688.0 294.7 L681.1 290.7 L680.2 290.1 L679.6 289.4 L679.2 288.6 L679.0 287.8 L679.2 287.0 L679.6 286.2 L680.2 285.5 L681.1 284.9 L725.6 259.2" fill="none" stroke="#cfcfcf" stroke-width="1" /><path d="M725.6 171.8 L725.6 259.2" fill="none" stroke="#ececec" stroke-width="1.05" /><path d="M735.7 171.8 L735.7 259.2" fill="none" stroke="#ececec" stroke-width="1.05" /><path d="M742.6 175.7 L742.6 263.2" fill="none" stroke="#ececec" stroke-width="1.05" /><path d="M742.6 181.6 L742.6 269.0" fill="none" stroke="#ececec" stroke-width="1.05" /><path d="M698.1 207.3 L698.1 294.7" fill="none" stroke="#ececec" stroke-width="1.05" /><path d="M688.0 207.3 L688.0 294.7" fill="none" stroke="#ececec" stroke-width="1.05" /><path d="M681.1 203.3 L681.1 290.7" fill="none" stroke="#ececec" stroke-width="1.05" /><path d="M681.1 197.4 L681.1 284.9" fill="none" stroke="#ececec" stroke-width="1.05" /><path d="M762.0 131.0 L763.1 130.5 L764.3 130.1 L765.7 129.9 L767.1 129.8 L768.5 129.9 L769.8 130.1 L771.1 130.5 L772.2 131.0 L779.1 135.0 L780.0 135.7 L780.7 136.4 L781.1 137.1 L781.2 138.0 L781.1 138.8 L780.7 139.5 L780.0 140.3 L779.1 140.9 L735.2 166.3 L734.1 166.8 L732.8 167.2 L731.5 167.4 L730.1 167.5 L728.7 167.4 L727.3 167.2 L726.1 166.8 L725.0 166.3 L718.1 162.3 L717.2 161.6 L716.5 160.9 L716.1 160.1 L716.0 159.3 L716.1 158.5 L716.5 157.7 L717.2 157.0 L718.1 156.4 L762.0 131.0" fill="none" stroke="#e4e4e4" stroke-width="1" /><path d="M762.0 218.4 L763.1 217.9 L764.3 217.5 L765.7 217.3 L767.1 217.2 L768.5 217.3 L769.8 217.5 L771.1 217.9 L772.2 218.4 L779.1 222.4 L780.0 223.1 L780.7 223.8 L781.1 224.6 L781.2 225.4 L781.1 226.2 L780.7 227.0 L780.0 227.7 L779.1 228.3 L735.2 253.7 L734.1 254.2 L732.8 254.6 L731.5 254.8 L730.1 254.9 L728.7 254.8 L727.3 254.6 L726.1 254.2 L725.0 253.7 L718.1 249.7 L717.2 249.0 L716.5 248.3 L716.1 247.5 L716.0 246.7 L716.1 245.9 L716.5 245.2 L717.2 244.4 L718.1 243.8 L762.0 218.4" fill="none" stroke="#cfcfcf" stroke-width="1" /><path d="M762.0 131.0 L762.0 218.4" fill="none" stroke="#ececec" stroke-width="1.05" /><path d="M772.2 131.0 L772.2 218.4" fill="none" stroke="#ececec" stroke-width="1.05" /><path d="M779.1 135.0 L779.1 222.4" fill="none" stroke="#ececec" stroke-width="1.05" /><path d="M779.1 140.9 L779.1 228.3" fill="none" stroke="#ececec" stroke-width="1.05" /><path d="M735.2 166.3 L735.2 253.7" fill="none" stroke="#ececec" stroke-width="1.05" /><path d="M725.0 166.3 L725.0 253.7" fill="none" stroke="#ececec" stroke-width="1.05" /><path d="M718.1 162.3 L718.1 249.7" fill="none" stroke="#ececec" stroke-width="1.05" /><path d="M718.1 156.4 L718.1 243.8" fill="none" stroke="#ececec" stroke-width="1.05" /><path d="M779.1 140.9 L780.2 140.4 L781.4 140.0 L782.8 139.8 L784.2 139.7 L785.6 139.8 L786.9 140.0 L788.2 140.4 L789.3 140.9 L796.1 144.8 L797.0 145.5 L797.7 146.2 L798.1 147.0 L798.2 147.8 L798.1 148.6 L797.7 149.4 L797.0 150.1 L796.1 150.7 L752.2 176.1 L751.1 176.6 L749.8 177.0 L748.5 177.2 L747.1 177.3 L745.7 177.2 L744.3 177.0 L743.1 176.6 L742.0 176.1 L735.2 172.1 L734.3 171.5 L733.6 170.8 L733.2 170.0 L733.1 169.2 L733.2 168.4 L733.6 167.6 L734.3 166.9 L735.2 166.3 L779.1 140.9" fill="none" stroke="#e4e4e4" stroke-width="1" /><path d="M779.1 228.3 L780.2 227.8 L781.4 227.4 L782.8 227.2 L784.2 227.1 L785.6 227.2 L786.9 227.4 L788.2 227.8 L789.3 228.3 L796.1 232.3 L797.0 232.9 L797.7 233.6 L798.1 234.4 L798.2 235.2 L798.1 236.0 L797.7 236.8 L797.0 237.5 L796.1 238.1 L752.2 263.5 L751.1 264.0 L749.8 264.4 L748.5 264.6 L747.1 264.7 L745.7 264.6 L744.3 264.4 L743.1 264.0 L742.0 263.5 L735.2 259.5 L734.3 258.9 L733.6 258.2 L733.2 257.4 L733.1 256.6 L733.2 255.8 L733.6 255.0 L734.3 254.3 L735.2 253.7 L779.1 228.3" fill="none" stroke="#cfcfcf" stroke-width="1" /><path d="M779.1 140.9 L779.1 228.3" fill="none" stroke="#ececec" stroke-width="1.05" /><path d="M789.3 140.9 L789.3 228.3" fill="none" stroke="#ececec" stroke-width="1.05" /><path d="M796.1 144.8 L796.1 232.3" fill="none" stroke="#ececec" stroke-width="1.05" /><path d="M796.1 150.7 L796.1 238.1" fill="none" stroke="#ececec" stroke-width="1.05" /><path d="M752.2 176.1 L752.2 263.5" fill="none" stroke="#ececec" stroke-width="1.05" /><path d="M742.0 176.1 L742.0 263.5" fill="none" stroke="#ececec" stroke-width="1.05" /><path d="M735.2 172.1 L735.2 259.5" fill="none" stroke="#ececec" stroke-width="1.05" /><path d="M735.2 166.3 L735.2 253.7" fill="none" stroke="#ececec" stroke-width="1.05" /><path d="M695.8 281.9 L722.4 266.6 L727.3 269.4 L700.7 284.8 L695.8 281.9" fill="none" stroke="#9a9a9a" stroke-width="0.9" /><path d="M750.3 250.4 L776.4 235.4 L781.1 238.1 L755.1 253.2 L750.3 250.4" fill="none" stroke="#9a9a9a" stroke-width="0.9" /><path d="M678.2 271.8 L707.2 255.0 L712.1 257.8 L683.0 274.6 L678.2 271.8" fill="none" stroke="#9a9a9a" stroke-width="0.9" /><path d="M704.6 256.6 L758.8 225.3 L763.4 227.9 L709.1 259.2 L704.6 256.6" fill="none" stroke="#9a9a9a" stroke-width="0.9" /><path d="M706.2 279.7 L713.4 275.7 L718.4 279.7 L711.3 284.3 L706.2 279.7" fill="none" stroke="#f4f4f4" stroke-width="1.3" /><path d="M706.2 279.7 L700.2 282.8 L705.2 287.4 L711.3 284.3" fill="none" stroke="#9a9a9a" stroke-width="1" /><path d="M761.0 249.3 L767.2 245.7 L771.2 248.8 L765.1 252.8 L761.0 249.3" fill="none" stroke="#f4f4f4" stroke-width="1.3" /><path d="M767.2 245.7 L774.3 242.2 L777.8 245.2 L771.2 248.8" fill="none" stroke="#9a9a9a" stroke-width="1" /><path d="M699.9 256.6 L732.2 238.0 L760.6 254.4 L728.3 273.0 L699.9 256.6" fill="none" stroke="#6a4a30" stroke-width="0.9" /><path d="M660.6 188.1 L681.5 176.0 L681.5 196.6 L660.6 208.7 L660.6 188.1" fill="none" stroke="#e88a2a" stroke-width="1.3" /><path d="M694.6 207.7 L715.5 195.6 L715.5 216.2 L694.6 228.3 L694.6 207.7" fill="none" stroke="#e88a2a" stroke-width="1.3" /><path d="M682.8 174.6 L746.9 137.6 L768.3 150.0 L704.2 187.0 L682.8 174.6" fill="none" stroke="#a6a662" stroke-width="1" /><path d="M699.9 165.9 L732.2 147.3 L760.6 163.7 L728.3 182.3 L699.9 165.9" fill="none" stroke="#7a5236" stroke-width="0.9" /><path d="M676.8 220.2 L676.8 196.0 L698.9 183.2" fill="none" stroke="#55557a" stroke-width="3" /><path d="M679.0 194.4 L726.7 166.9" fill="none" stroke="#3a3a8e" stroke-width="2.4" /><path d="M676.8 220.2 L676.8 288.4 L703.3 273.1" fill="none" stroke="#0b0bff" stroke-width="4" /><path d="M724.9 167.9 L730.7 164.6" fill="none" stroke="#0b0bff" stroke-width="3.4" /><path d="M710.3 165.7 L726.5 156.4 L736.1 157.3" fill="none" stroke="#4e4e4e" stroke-width="2" /><path d="M750.0 150.8 L752.4 149.4 L762.4 157.0 L765.7 156.7 L879.2 91.1" fill="none" stroke="#4e4e4e" stroke-width="3" /><path d="M709.1 178.2 L690.2 189.1 L701.2 195.4 L724.6 181.9" fill="none" stroke="#e01414" stroke-width="3.2" stroke-linejoin="round"/><path d="M752.9 165.7 L769.7 155.9" fill="none" stroke="#e01414" stroke-width="3" /><path d="M769.7 156.9 L881.4 92.4" fill="none" stroke="#e01818" stroke-width="1.5" /><path d="M698.9 174.7 L746.8 147.1 L756.4 152.6 L708.5 180.2 L698.9 174.7" fill="none" stroke="#7fd07f" stroke-width="1.6" /><path d="M681.5 179.6 L704.5 166.3 L709.7 166.0 L709.1 169.0 L686.2 182.3 L681.5 179.6" fill="none" stroke="#fff" stroke-width="1.4" /><path d="M686.2 176.9 L690.9 179.6" fill="none" stroke="#fff" stroke-width="1.2" /><path d="M689.0 175.3 L693.7 177.9" fill="none" stroke="#fff" stroke-width="1.2" /><path d="M694.2 172.3 L698.8 175.0" fill="none" stroke="#fff" stroke-width="1.2" /><path d="M704.6 166.4 L754.9 137.4 L759.4 140.0 L709.1 169.0" fill="none" stroke="#e8e8e8" stroke-width="1.1" /><path d="M741.3 145.1 L754.7 137.3 L759.5 140.0 L746.0 147.8 L741.3 145.1" fill="none" stroke="#fff" stroke-width="1.3" /><path d="M703.4 174.5 L708.4 171.6 L713.4 174.5 L708.5 177.4 L703.4 174.5" fill="none" stroke="#fff" stroke-width="1.1" /><path d="M709.7 170.9 L714.8 167.9 L719.9 170.8 L714.8 173.8 L709.7 170.9" fill="none" stroke="#a6a662" stroke-width="1.1" /><path d="M731.2 157.6 L736.3 154.7 L741.1 157.5 L736.1 160.4 L731.2 157.6" fill="none" stroke="#e0e0e0" stroke-width="1.1" /><path d="M741.8 152.6 L746.8 149.7 L751.7 152.5 L746.6 155.4 L741.8 152.6" fill="none" stroke="#e0e0e0" stroke-width="1.1" /><path d="M749.0 138.8 L768.3 150.0" fill="none" stroke="#d8d870" stroke-width="1.2" /><path d="M870.7 83.3 L897.5 67.8 L910.0 75.1 L883.3 90.5 L870.7 83.3" fill="none" stroke="#2fe02f" stroke-width="1.3" /><path d="M870.7 97.7 L897.5 82.3 L910.0 89.5 L883.3 104.9 L870.7 97.7" fill="none" stroke="#2fe02f" stroke-width="1.3" /><path d="M870.7 83.3 L870.7 97.7" fill="none" stroke="#2fe02f" stroke-width="1.3" /><path d="M897.5 67.8 L897.5 82.3" fill="none" stroke="#2fe02f" stroke-width="1.3" /><path d="M910.0 75.1 L910.0 89.5" fill="none" stroke="#2fe02f" stroke-width="1.3" /><path d="M883.3 90.5 L883.3 104.9" fill="none" stroke="#2fe02f" stroke-width="1.3" /></svg></div><div class="strip" style="left:3px;top:263px;width:547px"></div><div class="track" style="left:165.5px;top:263px;width:354.0px;height:11.500px"></div><svg class="a" style="left:3px;top:263px" width="166" height="12" viewBox="0 0 166 12"><g transform="translate(4.60 6) scale(.84) translate(-4.60 -6)"><path d="M3.3999999999999995 2.200h2.400v2.600l1.800 2.400h-6l1.800-2.400z" fill="#222"/><rect x="1.5999999999999996" y="7.600" width="6" height="2.400" fill="#2f8f7f" stroke="#222" stroke-width=".6"/></g><g transform="translate(14.70 6) scale(.84) translate(-14.70 -6)"><path d="M14.7 2.200v7.600M10.899999999999999 6h7.600" stroke="#111" stroke-width="2.200"/></g><g transform="translate(24.80 6) scale(.84) translate(-24.80 -6)"><path d="M20.999999999999996 6h7.600" stroke="#111" stroke-width="2.200"/></g><g transform="translate(34.90 6) scale(.84) translate(-34.90 -6)"><rect x="31.299999999999997" y="2.600" width="7.200" height="6.800" fill="#f4f4f0" stroke="#111" stroke-width="1.100"/><path d="M31.299999999999997 3.400h7.200" stroke="#111" stroke-width="1.600"/></g><g transform="translate(45.00 6) scale(.84) translate(-45.00 -6)"><path d="M41.2 9.600v-3l2.400-2 1.400 1.600 2.600-3.600 1.200 0v7z" fill="#111"/></g><g transform="translate(55.10 6) scale(.84) translate(-55.10 -6)"><path d="M52.5 8.600c-1.600-2 0-4 2-4M56.1 2.400v4.400c0 2-1.600 2.800-3 2.400" fill="none" stroke="#2f8f7f" stroke-width="1.100"/><path d="M56.7 3.200l2.400-.8-.6 2.600M56.9 7.400l2 .2" stroke="#3a9a4a" stroke-width=".9" fill="none"/></g><g transform="translate(65.20 6) scale(.84) translate(-65.20 -6)"><path d="M61.59999999999999 9l1-2.600 4.600-4.200 1.800 1.800-4.600 4.200z" fill="#f4f4f0" stroke="#222" stroke-width=".9"/></g><path d="M77.89999999999999 8.400c1-3.200-1.400-5.200-4.400-3.600" fill="none" stroke="#222" stroke-width="1.100"/><path d="M72.1 3.400l.4 3.400 2.800-1.600z" fill="#222"/><path d="M82.8 8.400c-1-3.200 1.400-5.200 4.400-3.600" fill="none" stroke="#222" stroke-width="1.100"/><path d="M88.6 3.400l-.4 3.400-2.800-1.600z" fill="#222"/><g transform="translate(95.50 6) scale(.84) translate(-95.50 -6)"><path d="M92.49999999999999 2.800h3.600v4.400" fill="none" stroke="#222" stroke-width="1"/><path d="M92.09999999999998 2.800l2-1.400v2.800z" fill="#222"/><path d="M92.89999999999999 9.400h6.600" stroke="#2f8f7f" stroke-width="1.400"/><path d="M97.29999999999998 5.400h2.200v4" stroke="#222" stroke-width=".8" fill="none"/></g><g transform="translate(105.60 6) scale(.84) translate(-105.60 -6)"><path d="M102.0 9.600h5.400M102.39999999999999 9.600l1.200-3.600 3.800-3.400 1.600 1.600-3.800 3.400z" fill="none" stroke="#222" stroke-width=".9"/><path d="M107.0 9.800h2.600" stroke="#a02020" stroke-width="1"/></g><rect x="110.69999999999999" y="0" width="10" height="11.500" fill="#d4d1c6"/><path d="M111.19999999999999 11.500v-11h9.500" fill="none" stroke="#555" stroke-width="1"/><g transform="translate(115.70 6) scale(.84) translate(-115.70 -6)"><rect x="112.29999999999998" y="2.600" width="6.800" height="6.800" fill="#35b0b0" stroke="#111" stroke-width="1.100"/><path d="M112.29999999999998 3.300h6.800" stroke="#111" stroke-width="1.300"/></g><g transform="translate(125.80 6) scale(.84) translate(-125.80 -6)"><path d="M122.39999999999998 2.200h6.800v5.800l-3.400 2-3.400-2z" fill="#2e6ad8" stroke="#111" stroke-width="1"/><rect x="124.19999999999999" y="3.400" width="3.200" height="3.800" fill="#6fd0d0"/></g><g transform="translate(135.90 6) scale(.84) translate(-135.90 -6)"><circle cx="135.89999999999998" cy="6.200" r="3.600" fill="#f0f0ea" stroke="#111" stroke-width="1.100"/><path d="M135.89999999999998 6.200v3.600M135.89999999999998 6.200l3-1.800" stroke="#555" stroke-width=".7"/></g><g transform="translate(146.00 6) scale(.84) translate(-146.00 -6)"><path d="M143.4 1.800h5.400l-1.600 2 1.600 2h-3l2 1.600-3.600 3.200.8-3h-1.600z" fill="#c9c320" stroke="#333" stroke-width=".8"/></g><rect x="152.500" y="0.500" width="10" height="11" fill="#EFECDF" stroke="#fff" stroke-width="1"/><path d="M152 11.500h11v-11.500" fill="none" stroke="#55534a" stroke-width="1"/><path d="M159.600 3.200v5.600l-3.200-2.800z" fill="#111"/></svg><div class="thumb" style="left:333px;top:263px;width:20.5px;height:11.5px"></div><div class="thumb" style="left:521.5px;top:263px;width:10.5px;height:11.5px"></div><div class="a" style="left:524.75px;top:265.25px;width:0;height:0;border-top:3px solid transparent;border-bottom:3px solid transparent;border-left:3.500px solid #111"></div><div class="wb" style="left:497.7px;top:4px"><div class="a" style="left:2.500px;top:7.500px;width:5px;height:2px;background:#fff"></div></div><div class="wb" style="left:513.1px;top:4px"><div class="a" style="left:2px;top:2px;width:7.500px;height:7px;border:1px solid #fff;border-top-width:2px"></div></div><div class="wb x" style="left:528.7px;top:4px"><svg class="a" style="left:0;top:0" width="11" height="11" viewBox="0 0 11 11"><path d="M2.200 2.200l6.600 6.600M8.800 2.200l-6.600 6.600" stroke="#fff" stroke-width="1.600"/></svg></div></div>
<div class="win" id="w3" style="left:39px;top:312px;width:536px;height:304px"><div class="a" style="left:0;top:0;width:1px;height:304px;background:#5068C4"></div><div class="a" style="left:0;top:1.500px;width:536px;height:1.500px;background:#5666BC"></div><div class="title" style="top:3px;left:1px;right:2.5px"></div><div class="a" style="left:1px;top:3px;width:532.5px;height:1px;background:#9DB2F6"></div><svg class="a" style="left:0;top:0" width="132.4" height="23.6" viewBox="0 0 132.4 23.6"><text x="17.8" y="17.6" font-family="Liberation Sans,sans-serif" font-weight="bold" font-size="9.700" fill="#E2EAFD" textLength="110.6" lengthAdjust="spacingAndGlyphs">Vista 3 - Default - Frontale</text></svg><svg class="a" style="left:3.5px;top:7.5px" width="11.500" height="11" viewBox="0 0 13 12" preserveAspectRatio="none"><rect x="0" y="0" width="12.500" height="11.500" fill="#0a2ad0"/><path d="M2 2.600c3-2 7.500-1.800 8.200 0 .6 1.600-3 2-4.600 2.600 2.400.2 5.400.8 5 2.800" fill="none" stroke="#fff" stroke-width="1.500"/><ellipse cx="5.600" cy="8.600" rx="3.600" ry="1.900" fill="#2bb53a" stroke="#fff" stroke-width=".9"/></svg><div class="cv" style="left:3px;top:23px;width:519px;height:267px"><svg width="519" height="267" viewBox="42 335 519 267"><path d="M106.5 364.0 L407.0 364.0" fill="none" stroke="#f4f41a" stroke-width="3.6" stroke-linecap="round"/><path d="M103.5 374.0 L408.5 374.0" fill="none" stroke="#f4f41a" stroke-width="3.6" stroke-linecap="round"/><ellipse cx="130" cy="372" rx="11" ry="1.200" fill="#e8e8a0"/><path d="M55.0 427.0 L55.0 377.5 L105.0 377.5" fill="none" stroke="#55557a" stroke-width="4.4" /><path d="M105.0 378.5 L144.0 378.5" fill="none" stroke="#30305a" stroke-width="2" /><path d="M55.0 426.5 L55.0 564.3 L115.0 564.3" fill="none" stroke="#0b0bff" stroke-width="4.8" /><path d="M93.0 564.0 L115.0 564.0" fill="none" stroke="#dfe4ff" stroke-width="0.9" /><rect x="56.8" y="382.5" width="47.7" height="41.7" rx="0" fill="none" stroke="#d88444" stroke-width="1.2"/><path d="M62.8 382.5 L62.8 424.2" fill="none" stroke="#d88444" stroke-width="1.2" /><path d="M57.0 385.6 L297.6 385.6" fill="none" stroke="#cfcfcf" stroke-width="1" /><path d="M67.5 385.6 L67.5 562.2 L297.6 562.2 L297.6 385.6" fill="none" stroke="#cfcfcf" stroke-width="1" /><path d="M160.6 385.6 L160.6 562.2" fill="none" stroke="#c4c4c4" stroke-width="1" /><path d="M175.5 385.6 L175.5 562.2" fill="none" stroke="#c4c4c4" stroke-width="1" /><path d="M190.6 385.6 L190.6 562.2" fill="none" stroke="#c4c4c4" stroke-width="1" /><path d="M283.7 385.6 L283.7 562.2" fill="none" stroke="#c4c4c4" stroke-width="1" /><rect x="73.4" y="398.8" width="205.2" height="150.6" rx="0" fill="none" stroke="#484848" stroke-width="1"/><path d="M122.4 565.0 L258.0 565.0" fill="none" stroke="#9a9a9a" stroke-width="1" /><path d="M122.4 562.0 L122.4 565.0" fill="none" stroke="#9a9a9a" stroke-width="1" /><path d="M258.0 562.0 L258.0 565.0" fill="none" stroke="#9a9a9a" stroke-width="1" /><path d="M227.0 562.2 L227.0 565.0" fill="none" stroke="#9a9a9a" stroke-width="0.8" /><path d="M246.0 562.2 L246.0 565.0" fill="none" stroke="#9a9a9a" stroke-width="0.8" /><path d="M144.0 383.8 L208.0 383.8" fill="none" stroke="#9aa070" stroke-width="1.4" /><rect x="121.4" y="378.0" width="21.8" height="4.9" rx="1.5" fill="none" stroke="#8fd08f" stroke-width="1.2"/><path d="M144.0 379.5 L172.0 379.5" fill="none" stroke="#2a7a7a" stroke-width="1.2" /><path d="M168.0 379.3 L177.0 379.3" fill="none" stroke="#2040e0" stroke-width="1.8" /><path d="M177.0 379.5 L213.0 379.5" fill="none" stroke="#6a7a6a" stroke-width="1" /><path d="M92.0 381.0 L103.0 381.0 L108.0 384.0 L120.0 384.0" fill="none" stroke="#e8e8e8" stroke-width="1.2" /><path d="M108.0 380.5 L120.0 380.5" fill="none" stroke="#901010" stroke-width="2" /><path d="M123.0 380.3 L142.0 380.3" fill="none" stroke="#6a4aa0" stroke-width="1.8" /><path d="M144.0 382.0 L148.0 379.5" fill="none" stroke="#e8e8e8" stroke-width="1" /><path d="M90.0 384.0 L106.0 384.0" fill="none" stroke="#f20d0d" stroke-width="3.6" /><path d="M104.0 384.9 L144.0 384.9" fill="none" stroke="#f20d0d" stroke-width="2.3" /><path d="M207.8 383.0 L497.0 383.0" fill="none" stroke="#f20d0d" stroke-width="5" /><path d="M212.0 385.7 L297.0 385.7" fill="none" stroke="#ffb0b0" stroke-width="0.8" /><rect x="490.4" y="372.5" width="60.6" height="29.1" rx="0" fill="none" stroke="#3fd03f" stroke-width="1.3"/><circle cx="345.600" cy="386.900" r="3.400" fill="none" stroke="#c8c8c8" stroke-width="1"/><circle cx="449.600" cy="394" r="3.400" fill="none" stroke="#c8c8c8" stroke-width="1"/><text x="413" y="370.800" font-family="Liberation Sans,sans-serif" font-size="8.600" font-weight="bold" fill="#dcd63a" textLength="83" lengthAdjust="spacingAndGlyphs">ALTEZZA DI SEZIONE</text></svg></div><div class="strip" style="left:3px;top:290px;width:530.5px"></div><div class="track" style="left:165.5px;top:290px;width:346.0px;height:11.500px"></div><svg class="a" style="left:3px;top:290px" width="166" height="12" viewBox="0 0 166 12"><g transform="translate(4.60 6) scale(.84) translate(-4.60 -6)"><path d="M3.3999999999999995 2.200h2.400v2.600l1.800 2.400h-6l1.800-2.400z" fill="#222"/><rect x="1.5999999999999996" y="7.600" width="6" height="2.400" fill="#2f8f7f" stroke="#222" stroke-width=".6"/></g><g transform="translate(14.70 6) scale(.84) translate(-14.70 -6)"><path d="M14.7 2.200v7.600M10.899999999999999 6h7.600" stroke="#111" stroke-width="2.200"/></g><g transform="translate(24.80 6) scale(.84) translate(-24.80 -6)"><path d="M20.999999999999996 6h7.600" stroke="#111" stroke-width="2.200"/></g><g transform="translate(34.90 6) scale(.84) translate(-34.90 -6)"><rect x="31.299999999999997" y="2.600" width="7.200" height="6.800" fill="#f4f4f0" stroke="#111" stroke-width="1.100"/><path d="M31.299999999999997 3.400h7.200" stroke="#111" stroke-width="1.600"/></g><g transform="translate(45.00 6) scale(.84) translate(-45.00 -6)"><path d="M41.2 9.600v-3l2.400-2 1.400 1.600 2.600-3.600 1.200 0v7z" fill="#111"/></g><g transform="translate(55.10 6) scale(.84) translate(-55.10 -6)"><path d="M52.5 8.600c-1.600-2 0-4 2-4M56.1 2.400v4.400c0 2-1.600 2.800-3 2.400" fill="none" stroke="#2f8f7f" stroke-width="1.100"/><path d="M56.7 3.200l2.400-.8-.6 2.600M56.9 7.400l2 .2" stroke="#3a9a4a" stroke-width=".9" fill="none"/></g><g transform="translate(65.20 6) scale(.84) translate(-65.20 -6)"><path d="M61.59999999999999 9l1-2.600 4.600-4.200 1.800 1.800-4.600 4.200z" fill="#f4f4f0" stroke="#222" stroke-width=".9"/></g><path d="M77.89999999999999 8.400c1-3.200-1.400-5.200-4.400-3.600" fill="none" stroke="#222" stroke-width="1.100"/><path d="M72.1 3.400l.4 3.400 2.800-1.600z" fill="#222"/><path d="M82.8 8.400c-1-3.200 1.400-5.200 4.400-3.600" fill="none" stroke="#222" stroke-width="1.100"/><path d="M88.6 3.400l-.4 3.400-2.800-1.600z" fill="#222"/><g transform="translate(95.50 6) scale(.84) translate(-95.50 -6)"><path d="M92.49999999999999 2.800h3.600v4.400" fill="none" stroke="#222" stroke-width="1"/><path d="M92.09999999999998 2.800l2-1.400v2.800z" fill="#222"/><path d="M92.89999999999999 9.400h6.600" stroke="#2f8f7f" stroke-width="1.400"/><path d="M97.29999999999998 5.400h2.200v4" stroke="#222" stroke-width=".8" fill="none"/></g><g transform="translate(105.60 6) scale(.84) translate(-105.60 -6)"><path d="M102.0 9.600h5.400M102.39999999999999 9.600l1.200-3.600 3.800-3.400 1.600 1.600-3.800 3.400z" fill="none" stroke="#222" stroke-width=".9"/><path d="M107.0 9.800h2.600" stroke="#a02020" stroke-width="1"/></g><rect x="110.69999999999999" y="0" width="10" height="11.500" fill="#d4d1c6"/><path d="M111.19999999999999 11.500v-11h9.500" fill="none" stroke="#555" stroke-width="1"/><g transform="translate(115.70 6) scale(.84) translate(-115.70 -6)"><rect x="112.29999999999998" y="2.600" width="6.800" height="6.800" fill="#35b0b0" stroke="#111" stroke-width="1.100"/><path d="M112.29999999999998 3.300h6.800" stroke="#111" stroke-width="1.300"/></g><g transform="translate(125.80 6) scale(.84) translate(-125.80 -6)"><path d="M122.39999999999998 2.200h6.800v5.800l-3.400 2-3.400-2z" fill="#2e6ad8" stroke="#111" stroke-width="1"/><rect x="124.19999999999999" y="3.400" width="3.200" height="3.800" fill="#6fd0d0"/></g><g transform="translate(135.90 6) scale(.84) translate(-135.90 -6)"><circle cx="135.89999999999998" cy="6.200" r="3.600" fill="#f0f0ea" stroke="#111" stroke-width="1.100"/><path d="M135.89999999999998 6.200v3.600M135.89999999999998 6.200l3-1.800" stroke="#555" stroke-width=".7"/></g><g transform="translate(146.00 6) scale(.84) translate(-146.00 -6)"><path d="M143.4 1.800h5.400l-1.600 2 1.600 2h-3l2 1.600-3.600 3.200.8-3h-1.600z" fill="#c9c320" stroke="#333" stroke-width=".8"/></g><rect x="152.500" y="0.500" width="10" height="11" fill="#EFECDF" stroke="#fff" stroke-width="1"/><path d="M152 11.500h11v-11.500" fill="none" stroke="#55534a" stroke-width="1"/><path d="M159.600 3.200v5.600l-3.200-2.800z" fill="#111"/></svg><div class="thumb" style="left:328px;top:290px;width:19.5px;height:11.5px"></div><div class="thumb" style="left:511.5px;top:290px;width:10.5px;height:11.5px"></div><div class="a" style="left:514.75px;top:292.25px;width:0;height:0;border-top:3px solid transparent;border-bottom:3px solid transparent;border-left:3.500px solid #111"></div><div class="track" style="left:522px;top:23px;width:11.500px;height:267px"></div><div class="thumb" style="left:522px;top:23px;width:11.5px;height:11px"></div><div class="a" style="left:524.25px;top:26.5px;width:0;height:0;border-left:3px solid transparent;border-right:3px solid transparent;border-bottom:3.500px solid #111"></div><div class="thumb" style="left:522px;top:278.5px;width:11.5px;height:11.5px"></div><div class="a" style="left:524.25px;top:282.25px;width:0;height:0;border-left:3px solid transparent;border-right:3px solid transparent;border-top:3.500px solid #111"></div><div class="thumb" style="left:522px;top:149px;width:11.5px;height:13.5px"></div><div class="wb" style="left:487.5px;top:7px"><div class="a" style="left:2.500px;top:7.500px;width:5px;height:2px;background:#fff"></div></div><div class="wb" style="left:502.9px;top:7px"><div class="a" style="left:2px;top:2px;width:7.500px;height:7px;border:1px solid #fff;border-top-width:2px"></div></div><div class="wb x" style="left:518.5px;top:7px"><svg class="a" style="left:0;top:0" width="11" height="11" viewBox="0 0 11 11"><path d="M2.200 2.200l6.600 6.600M8.800 2.200l-6.600 6.600" stroke="#fff" stroke-width="1.600"/></svg></div></div>
<div class="win" id="w4" style="left:574px;top:312px;width:540px;height:304px"><div class="a" style="left:0;top:0;width:1px;height:304px;background:#5068C4"></div><div class="a" style="left:0;top:1.500px;width:540px;height:1.500px;background:#5666BC"></div><div class="title" style="top:3px;left:2.5px;right:0px"></div><div class="a" style="left:2.5px;top:3px;width:537.5px;height:1px;background:#9DB2F6"></div><svg class="a" style="left:0;top:0" width="129.1" height="23.6" viewBox="0 0 129.1 23.6"><text x="17.8" y="17.6" font-family="Liberation Sans,sans-serif" font-weight="bold" font-size="9.700" fill="#E2EAFD" textLength="107.3" lengthAdjust="spacingAndGlyphs">Vista 4 - Default - Sinistra</text></svg><svg class="a" style="left:3.5px;top:7.5px" width="11.500" height="11" viewBox="0 0 13 12" preserveAspectRatio="none"><rect x="0" y="0" width="12.500" height="11.500" fill="#0a2ad0"/><path d="M2 2.600c3-2 7.500-1.800 8.200 0 .6 1.600-3 2-4.600 2.600 2.400.2 5.400.8 5 2.800" fill="none" stroke="#fff" stroke-width="1.500"/><ellipse cx="5.600" cy="8.600" rx="3.600" ry="1.900" fill="#2bb53a" stroke="#fff" stroke-width=".9"/></svg><div class="cv" style="left:3px;top:23px;width:527px;height:267px"></div><div class="strip" style="left:3px;top:290px;width:547px"></div><div class="track" style="left:165.5px;top:290px;width:354.0px;height:11.500px"></div><svg class="a" style="left:3px;top:290px" width="166" height="12" viewBox="0 0 166 12"><g transform="translate(4.60 6) scale(.84) translate(-4.60 -6)"><path d="M3.3999999999999995 2.200h2.400v2.600l1.800 2.400h-6l1.800-2.400z" fill="#222"/><rect x="1.5999999999999996" y="7.600" width="6" height="2.400" fill="#2f8f7f" stroke="#222" stroke-width=".6"/></g><g transform="translate(14.70 6) scale(.84) translate(-14.70 -6)"><path d="M14.7 2.200v7.600M10.899999999999999 6h7.600" stroke="#111" stroke-width="2.200"/></g><g transform="translate(24.80 6) scale(.84) translate(-24.80 -6)"><path d="M20.999999999999996 6h7.600" stroke="#111" stroke-width="2.200"/></g><g transform="translate(34.90 6) scale(.84) translate(-34.90 -6)"><rect x="31.299999999999997" y="2.600" width="7.200" height="6.800" fill="#f4f4f0" stroke="#111" stroke-width="1.100"/><path d="M31.299999999999997 3.400h7.200" stroke="#111" stroke-width="1.600"/></g><g transform="translate(45.00 6) scale(.84) translate(-45.00 -6)"><path d="M41.2 9.600v-3l2.400-2 1.400 1.600 2.600-3.600 1.200 0v7z" fill="#111"/></g><g transform="translate(55.10 6) scale(.84) translate(-55.10 -6)"><path d="M52.5 8.600c-1.600-2 0-4 2-4M56.1 2.400v4.400c0 2-1.600 2.800-3 2.400" fill="none" stroke="#2f8f7f" stroke-width="1.100"/><path d="M56.7 3.200l2.400-.8-.6 2.600M56.9 7.400l2 .2" stroke="#3a9a4a" stroke-width=".9" fill="none"/></g><g transform="translate(65.20 6) scale(.84) translate(-65.20 -6)"><path d="M61.59999999999999 9l1-2.600 4.600-4.200 1.800 1.800-4.600 4.200z" fill="#f4f4f0" stroke="#222" stroke-width=".9"/></g><path d="M77.89999999999999 8.400c1-3.200-1.400-5.200-4.400-3.600" fill="none" stroke="#222" stroke-width="1.100"/><path d="M72.1 3.400l.4 3.400 2.800-1.600z" fill="#222"/><path d="M82.8 8.400c-1-3.200 1.400-5.200 4.400-3.600" fill="none" stroke="#222" stroke-width="1.100"/><path d="M88.6 3.400l-.4 3.400-2.800-1.600z" fill="#222"/><g transform="translate(95.50 6) scale(.84) translate(-95.50 -6)"><path d="M92.49999999999999 2.800h3.600v4.400" fill="none" stroke="#222" stroke-width="1"/><path d="M92.09999999999998 2.800l2-1.400v2.800z" fill="#222"/><path d="M92.89999999999999 9.400h6.600" stroke="#2f8f7f" stroke-width="1.400"/><path d="M97.29999999999998 5.400h2.200v4" stroke="#222" stroke-width=".8" fill="none"/></g><g transform="translate(105.60 6) scale(.84) translate(-105.60 -6)"><path d="M102.0 9.600h5.400M102.39999999999999 9.600l1.200-3.600 3.800-3.400 1.600 1.600-3.800 3.400z" fill="none" stroke="#222" stroke-width=".9"/><path d="M107.0 9.800h2.600" stroke="#a02020" stroke-width="1"/></g><rect x="110.69999999999999" y="0" width="10" height="11.500" fill="#d4d1c6"/><path d="M111.19999999999999 11.500v-11h9.500" fill="none" stroke="#555" stroke-width="1"/><g transform="translate(115.70 6) scale(.84) translate(-115.70 -6)"><rect x="112.29999999999998" y="2.600" width="6.800" height="6.800" fill="#35b0b0" stroke="#111" stroke-width="1.100"/><path d="M112.29999999999998 3.300h6.800" stroke="#111" stroke-width="1.300"/></g><g transform="translate(125.80 6) scale(.84) translate(-125.80 -6)"><path d="M122.39999999999998 2.200h6.800v5.800l-3.400 2-3.400-2z" fill="#2e6ad8" stroke="#111" stroke-width="1"/><rect x="124.19999999999999" y="3.400" width="3.200" height="3.800" fill="#6fd0d0"/></g><g transform="translate(135.90 6) scale(.84) translate(-135.90 -6)"><circle cx="135.89999999999998" cy="6.200" r="3.600" fill="#f0f0ea" stroke="#111" stroke-width="1.100"/><path d="M135.89999999999998 6.200v3.600M135.89999999999998 6.200l3-1.800" stroke="#555" stroke-width=".7"/></g><g transform="translate(146.00 6) scale(.84) translate(-146.00 -6)"><path d="M143.4 1.800h5.400l-1.600 2 1.600 2h-3l2 1.600-3.600 3.200.8-3h-1.600z" fill="#c9c320" stroke="#333" stroke-width=".8"/></g><rect x="152.500" y="0.500" width="10" height="11" fill="#EFECDF" stroke="#fff" stroke-width="1"/><path d="M152 11.500h11v-11.500" fill="none" stroke="#55534a" stroke-width="1"/><path d="M159.600 3.200v5.600l-3.200-2.800z" fill="#111"/></svg><div class="thumb" style="left:333px;top:290px;width:20.5px;height:11.5px"></div><div class="thumb" style="left:521.5px;top:290px;width:10.5px;height:11.5px"></div><div class="a" style="left:524.75px;top:292.25px;width:0;height:0;border-top:3px solid transparent;border-bottom:3px solid transparent;border-left:3.500px solid #111"></div><div class="wb" style="left:497.7px;top:7px"><div class="a" style="left:2.500px;top:7.500px;width:5px;height:2px;background:#fff"></div></div><div class="wb" style="left:513.1px;top:7px"><div class="a" style="left:2px;top:2px;width:7.500px;height:7px;border:1px solid #fff;border-top-width:2px"></div></div><div class="wb x" style="left:528.7px;top:7px"><svg class="a" style="left:0;top:0" width="11" height="11" viewBox="0 0 11 11"><path d="M2.200 2.200l6.600 6.600M8.800 2.200l-6.600 6.600" stroke="#fff" stroke-width="1.600"/></svg></div></div>
<div class="a" style="left:893px;top:267px;width:187px;height:31.500px;background:#7088DA;border-radius:4px 4px 0 0;overflow:hidden"><div class="title" style="height:20px"></div><svg class="a" style="left:0;top:0" width="135.0" height="20.6" viewBox="0 0 135.0 20.6"><text x="17.4" y="14.6" font-family="Liberation Sans,sans-serif" font-weight="bold" font-size="9.700" fill="#E2EAFD" textLength="113.6" lengthAdjust="spacingAndGlyphs">Imposta profondità di vis…</text></svg><svg class="a" style="left:3.5px;top:4.5px" width="11.500" height="11" viewBox="0 0 13 12" preserveAspectRatio="none"><rect x="0" y="0" width="12.500" height="11.500" fill="#0a2ad0"/><path d="M2 2.600c3-2 7.500-1.800 8.200 0 .6 1.600-3 2-4.600 2.600 2.400.2 5.400.8 5 2.800" fill="none" stroke="#fff" stroke-width="1.500"/><ellipse cx="5.600" cy="8.600" rx="3.600" ry="1.900" fill="#2bb53a" stroke="#fff" stroke-width=".9"/></svg><div class="a" style="left:3px;top:20px;width:181px;height:9px;background:#EFECDF"></div><div class="wb" style="left:139px;top:4.5px"><div class="a" style="left:2.500px;top:7.500px;width:5px;height:2px;background:#fff"></div></div><div class="wb dis" style="left:154.4px;top:4.5px"><div class="a" style="left:2px;top:2px;width:7.500px;height:7px;border:1px solid #9fb4ee;border-top-width:2px"></div></div><div class="wb x" style="left:170px;top:4.5px"><svg class="a" style="left:0;top:0" width="11" height="11" viewBox="0 0 11 11"><path d="M2.200 2.200l6.600 6.600M8.800 2.200l-6.600 6.600" stroke="#fff" stroke-width="1.600"/></svg></div></div>
<div id="status" class="a"></div>
<div class="a" style="left:0;top:636px;width:1104px;height:4px;background:linear-gradient(#EFECDF 0,#d8d5c8 30%,#98968b 55%,#8c8a80 100%)"></div><div class="a" style="left:39px;top:613px;width:1065px;height:1.500px;background:#C4C8EC"></div><div class="a" style="left:39px;top:614.300px;width:1065px;height:1.700px;background:#4F5CA2"></div>
<div class="a" style="left:4px;top:620px;width:87px;height:14px;background:#fff;border:1px solid #55534a;border-right-color:#E8E6DA;border-bottom-color:#E8E6DA"></div>
<div class="a" style="left:22px;top:622px;font-size:9px;line-height:10px;color:#333;letter-spacing:-0.55px">Default</div>
<div class="a" style="left:78px;top:622px;width:11px;height:11px;background:#EFECDF;border:1px solid #fff;border-right-color:#55534a;border-bottom-color:#55534a"></div>
<div class="dd" style="left:81px;top:626px"></div>
<div class="a" style="left:93px;top:619px;width:2px;height:18px;border-left:1px solid #C5C2B2;border-right:1px solid #fff"></div>
<div class="a" style="left:113px;top:619px;width:2px;height:18px;border-left:1px solid #C5C2B2;border-right:1px solid #fff"></div>
<div class="a" style="left:194px;top:617px;width:2px;height:23px;border-left:1px solid #55534a;border-right:1px solid #fff"></div>
<div class="a" style="left:425px;top:617px;width:2px;height:23px;border-left:1px solid #55534a;border-right:1px solid #fff"></div>
<div class="a" style="left:712px;top:636px;width:1px;height:4px;background:#77756a"></div>
<div id="vb" class="a" style="left:0;top:0">
<span class="a vbn on" style="left:117.600px">1</span><span class="a vbn on" style="left:127px">2</span><span class="a vbn on" style="left:136.500px">3</span><span class="a vbn on" style="left:146px">4</span>
<span class="a vbn" style="left:155.500px">5</span><span class="a vbn" style="left:164.800px">6</span><span class="a vbn" style="left:174.300px">7</span><span class="a vbn" style="left:183.800px">8</span>
</div>
<style>
.vbn{top:621.500px;width:8px;height:12.500px;font-size:9.500px;line-height:12.500px;text-align:center;color:#222;border-right:1px solid #8c8a7e;border-left:1px solid #fff;background:#EFECDF}
.vbn.on{background:#2F5FD0;color:#BFD6FF;border-left-color:#2F5FD0;border-right-color:#223}
</style>
<div class="a" style="left:200.500px;top:619px;width:17px;height:17px;background:#F5F3EA;border:1px solid #55534a;border-right-color:#fff;border-bottom-color:#fff"></div>
<div class="a" style="left:277.500px;top:619px;width:17px;height:17px;background:#BDBBB2;border:1px solid #55534a;border-right-color:#fff;border-bottom-color:#fff"></div>
<svg class="a" style="left:0;top:612px" width="440" height="28" viewBox="0 612 440 28">
<!-- combo icon -->
<rect x="5.500" y="622.500" width="7" height="6" fill="#fff" stroke="#222" stroke-width="1"/><rect x="8.500" y="625.500" width="7" height="6" fill="#fff" stroke="#222" stroke-width="1"/><path d="M5.500 623.200h7M8.500 626.200h7" stroke="#222" stroke-width="1.400"/>
<!-- window icon -->
<rect x="98" y="621.500" width="8.500" height="8" fill="#fff" stroke="#222" stroke-width="1.100"/><rect x="102" y="625.500" width="8.500" height="8" fill="#fff" stroke="#222" stroke-width="1.100"/><path d="M98 622.300h8.500M102 626.300h8.500" stroke="#222" stroke-width="1.600"/>
<!-- snap 1 -->
<path d="M204 634l11-11.500" stroke="#333" stroke-width="1.100"/><path d="M203.500 627l6 6M209.500 627l-6 6" stroke="#c9c320" stroke-width="2.200"/><path d="M211 622.500l4 4M215 622.500l-4 4" stroke="#7aa" stroke-width=".7"/>
<!-- snap 2..4 -->
<path d="M226 630.500c3 .5 4-1 5.500-2.500s3.500-1 6-4.500" fill="none" stroke="#223a5a" stroke-width="1.100"/><circle cx="231.500" cy="628.300" r="1.500" fill="#6fd0d0" stroke="#1a8a8a" stroke-width=".7"/>
<path d="M245 627.500c1 4 5 4.500 7 2s2-4 3.500-6" fill="none" stroke="#223a5a" stroke-width="1.100"/><circle cx="245.500" cy="628" r="1.500" fill="#6fd0d0" stroke="#1a8a8a" stroke-width=".7"/><circle cx="255" cy="624" r="1.500" fill="#6fd0d0" stroke="#1a8a8a" stroke-width=".7"/><circle cx="251" cy="630.500" r="1.300" fill="#6fd0d0" stroke="#1a8a8a" stroke-width=".7"/>
<path d="M263 631l10.500-6.500" stroke="#223a5a" stroke-width="1.100"/><circle cx="268.300" cy="627.700" r="1.500" fill="#6fd0d0" stroke="#1a8a8a" stroke-width=".7"/>
<!-- snap 5 pressed -->
<circle cx="286.300" cy="627.700" r="4.600" fill="none" stroke="#222" stroke-width="1.300"/><circle cx="286.300" cy="627.700" r="1.500" fill="#6fd0d0" stroke="#1a8a8a" stroke-width=".7"/>
<!-- snap 6 -->
<circle cx="304.300" cy="627.700" r="3.600" fill="none" stroke="#222" stroke-width="1"/><path d="M304.300 622.200l5.500 5.500-5.500 5.500-5.500-5.500z" fill="none" stroke="#222" stroke-width=".9"/><circle cx="304.300" cy="627.700" r="1.500" fill="#6fd0d0" stroke="#1a8a8a" stroke-width=".7"/>
<!-- snap 7 -->
<path d="M317 625.500c2.500-2 4 .5 5.500 2.200s3.500 3.500 6 1.300" fill="none" stroke="#223a5a" stroke-width="1.100"/><circle cx="322.600" cy="627.700" r="1.500" fill="#6fd0d0" stroke="#1a8a8a" stroke-width=".7"/>
<!-- snap 8 -->
<path d="M336 623l10.500 9.500M336.500 632.500l10-9" stroke="#223a5a" stroke-width="1.100"/><circle cx="341.300" cy="627.800" r="1.500" fill="#6fd0d0" stroke="#1a8a8a" stroke-width=".7"/>
<!-- snap 9 -->
<path d="M353.500 624.500h11.500" stroke="#222" stroke-width="1.100"/><path d="M354.500 632c1.500-5 7.500-5 9 0" fill="none" stroke="#222" stroke-width="1.100"/>
<!-- snap 10 -->
<path d="M371.500 626l11.500-1.500" stroke="#222" stroke-width="1.100"/><path d="M372.500 632.500c1.500-5.500 7.500-5.500 9.500-.5" fill="none" stroke="#222" stroke-width="1.100"/><circle cx="377.500" cy="625.500" r="1.500" fill="#6fd0d0" stroke="#1a8a8a" stroke-width=".7"/>
<!-- snap 11 -->
<path d="M390.500 631.500h10.500M396 631.500v-9M393.500 631.500v-2.500h2.500" fill="none" stroke="#222" stroke-width="1.100"/>
<!-- snap 12 -->
<rect x="408.500" y="622" width="10.500" height="10.500" fill="none" stroke="#222" stroke-width="1"/><circle cx="408.500" cy="622" r="1.400" fill="#6fd0d0" stroke="#1a8a8a" stroke-width=".6"/><circle cx="419" cy="622" r="1.400" fill="#6fd0d0" stroke="#1a8a8a" stroke-width=".6"/><circle cx="408.500" cy="632.500" r="1.400" fill="#6fd0d0" stroke="#1a8a8a" stroke-width=".6"/><circle cx="419" cy="632.500" r="1.400" fill="#6fd0d0" stroke="#1a8a8a" stroke-width=".6"/><circle cx="413.700" cy="627.300" r="1.400" fill="#6fd0d0" stroke="#1a8a8a" stroke-width=".6"/>
</svg>
</body>
</html>
